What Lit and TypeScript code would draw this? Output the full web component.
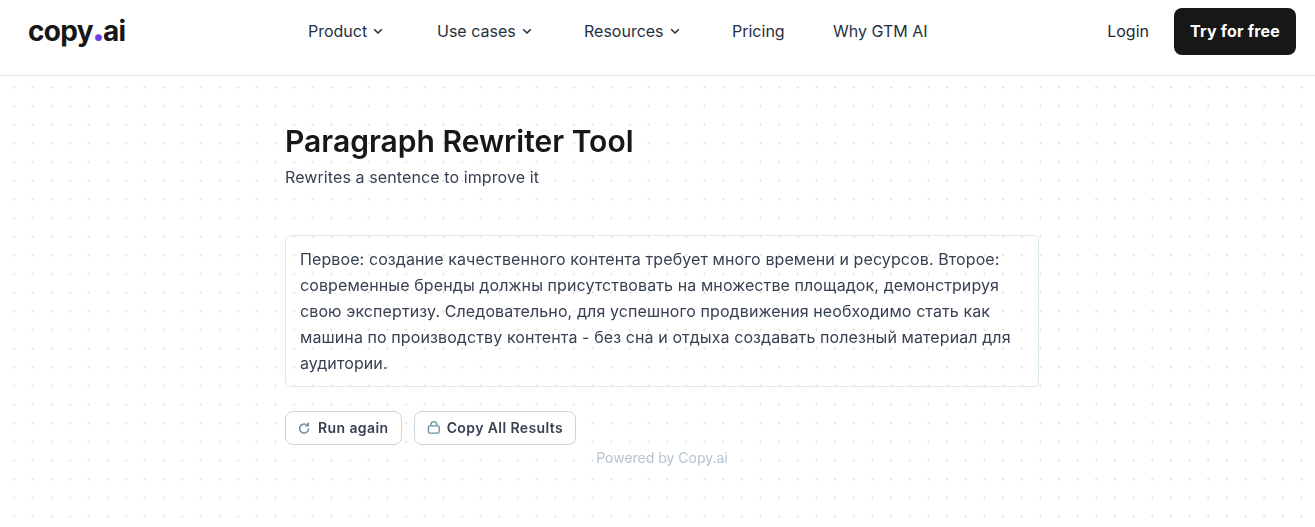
import { LitElement, html, css, svg } from 'lit';
import { customElement } from 'lit/decorators.js';

const chevron = html`<svg class="chev" width="12" height="12" viewBox="0 0 12 12" fill="none">
  <path d="M2.2 4.2 6 8l3.8-3.8" stroke="#1f2937" stroke-width="1.5" />
</svg>`;

const refresh = svg`<path d="M10.6 7.6a4.5 4.5 0 1 1-2.6-4.1" stroke="#6b8ea3" stroke-width="1.5" fill="none" />
  <path d="M11 .8v4.6H6.6z" fill="#6b8ea3" />`;

const clip = svg`<rect x="1.4" y="4.8" width="10.8" height="7.4" rx="1.4" stroke="#6b8ea3" stroke-width="1.3" fill="none" />
  <path d="M3.9 4.8V3.6a2.9 2.9 0 0 1 5.8 0v1.2" stroke="#6b8ea3" stroke-width="1.3" fill="none" />`;

@customElement('app-root')
export class AppRoot extends LitElement {
  static styles = css`
    :host {
      display: block;
      height: 527px;
      overflow: hidden;
      font-family: Inter, 'Noto Sans', sans-serif;
      color: #1f2937;
      background: #fff;
    }

    .nav {
      height: 62px;
      padding-bottom: 13px;
      display: flex;
      align-items: center;
      border-bottom: 1px solid #e2e2e2;
      background: #fff;
      box-sizing: content-box;
    }

    .logo {
      margin-left: 28px;
      width: 280px;
      font-size: 28px;
      font-weight: 700;
      letter-spacing: -0.7px;
      color: #171717;
      line-height: 1;
    }

    .logo span {
      color: #6d3fe0;
      font-size: 40px;
      line-height: 0;
      margin: 0 -1.5px 0 -1px;
    }

    .links {
      display: flex;
      align-items: center;
      font-size: 16px;
      line-height: 24px;
      color: #27303f;
    }

    .links a {
      display: flex;
      align-items: center;
      gap: 5px;
    }

    .links a:nth-child(1) {
      width: 129px;
    }
    .links a:nth-child(2) {
      width: 147px;
    }
    .links a:nth-child(3) {
      width: 148px;
    }
    .links a:nth-child(4) {
      width: 101px;
    }

    .right {
      margin-left: auto;
      display: flex;
      align-items: center;
      gap: 25px;
      margin-right: 19px;
      font-size: 16px;
    }

    .try {
      width: 122px;
      height: 47px;
      display: flex;
      align-items: center;
      justify-content: center;
      background: #171717;
      color: #fff;
      font-weight: 700;
      letter-spacing: 0.2px;
      border-radius: 8px;
    }

    .page {
      height: 451px;
      background-image: radial-gradient(circle at center, #e4e4e4 1px, transparent 1.2px);
      background-size: 18.67px 18.67px;
      background-position: 5px 2px;
      padding: 0 0 0 285px;
    }

    .tool {
      width: 754px;
      will-change: opacity;
    }

    h1 {
      margin: 0;
      padding-top: 46px;
      font-size: 30px;
      line-height: 38px;
      font-weight: 600;
      color: #171717;
    }

    .sub {
      margin: 5px 0 0;
      font-size: 16px;
      line-height: 24px;
      letter-spacing: 0.1px;
      color: #374151;
    }

    .result {
      margin-top: 46px;
      box-sizing: border-box;
      height: 152px;
      padding: 10px 14px;
      border: 1px solid #dcebf0;
      border-radius: 6px;
      font-size: 16px;
      line-height: 26px;
      letter-spacing: 0.1px;
      color: #374151;
    }

    .actions {
      display: flex;
      gap: 12px;
      margin-top: 24px;
    }

    .btn {
      height: 34px;
      box-sizing: border-box;
      display: flex;
      align-items: center;
      gap: 6px;
      padding: 0 12.2px 1px 12px;
      border: 1px solid #c5d6e1;
      border-radius: 8px;
      background: #fff;
      font-family: inherit;
      font-size: 14px;
      font-weight: 600;
      letter-spacing: 0.4px;
      color: #374151;
    }

    .powered {
      margin-top: 3px;
      text-align: center;
      font-size: 14px;
      line-height: 20px;
      color: #b4c6d4;
    }
  `;

  render() {
    return html`
      <header class="nav">
        <div class="logo">copy<span>.</span>ai</div>
        <nav class="links">
          <a>Product ${chevron}</a>
          <a>Use cases ${chevron}</a>
          <a>Resources ${chevron}</a>
          <a>Pricing</a>
          <a>Why GTM AI</a>
        </nav>
        <div class="right">
          <a>Login</a>
          <a class="try">Try for free</a>
        </div>
      </header>
      <main class="page">
        <div class="tool">
          <h1>Paragraph Rewriter Tool</h1>
          <p class="sub">Rewrites a sentence to improve it</p>
          <div class="result">
            Первое: создание качественного контента требует много времени и ресурсов. Второе:
            современные бренды должны присутствовать на множестве площадок, демонстрируя свою
            экспертизу. Следовательно, для успешного продвижения необходимо стать как машина по
            производству контента - без сна и отдыха создавать полезный материал для аудитории.
          </div>
          <div class="actions">
            <button class="btn">
              <svg width="14" height="14" viewBox="0 0 14 14">${refresh}</svg>Run again
            </button>
            <button class="btn">
              <svg width="14" height="14" viewBox="0 0 14 14">${clip}</svg>Copy All Results
            </button>
          </div>
          <div class="powered">Powered by Copy.ai</div>
        </div>
      </main>
    `;
  }
}
